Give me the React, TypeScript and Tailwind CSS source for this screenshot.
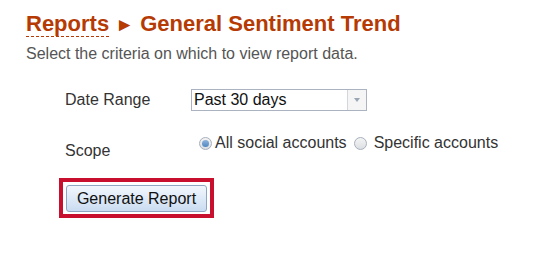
import { useState } from "react"

function Radio({ checked }: { checked: boolean }) {
  return (
    <span className="relative inline-flex h-[13px] w-[13px] items-center justify-center rounded-full border border-[#a7b0bd] bg-gradient-to-b from-[#f4f4f4] to-[#dcdfe3]">
      {checked && (
        <span className="h-[7px] w-[7px] rounded-full bg-gradient-to-b from-[#8fb4dc] to-[#4f86c1]" />
      )}
    </span>
  )
}

export default function App() {
  const [scope, setScope] = useState("all")

  return (
    <div className="min-h-[257px] w-[541px] bg-white pl-[26px] pt-[12px] font-['Liberation_Sans',Arial,sans-serif]">
      {/* Title */}
      <h1 className="text-[22px] font-bold leading-[24px] text-[#b53a04]">
        <span className="border-b border-dashed border-[#b53a04]">Reports</span>{" "}
        <span className="text-[19px]">&#9658;</span> General Sentiment Trend
      </h1>
      <p className="mt-[8px] text-[16px] leading-[18px] text-[#555]">
        Select the criteria on which to view report data.
      </p>

      {/* Criteria */}
      <div className="pl-[39px] text-[16px] leading-[18px] text-[#333]">
        <div className="mt-[26px] flex h-[22px] items-center">
          <div className="w-[126px]">Date Range</div>
          <div className="flex h-[22px] w-[176px] border border-[#abb3c0] bg-white">
            <div className="flex-1 pl-[2px] leading-[20px] text-[#111]">Past 30 days</div>
            <div className="flex w-[19px] items-center justify-center border-l border-[#d3d7dd] bg-[#f5f5f5]">
              <span className="h-0 w-0 border-x-[3px] border-t-[4px] border-x-transparent border-t-[#9aa6b4]" />
            </div>
          </div>
        </div>

        <div className="mt-[23px] flex items-start">
          <div className="w-[126px] pt-[8px]">Scope</div>
          <div className="flex items-center pl-[8px]">
            <label className="flex items-center gap-[3px]" onClick={() => setScope("all")}>
              <Radio checked={scope === "all"} />
              <span>All social accounts</span>
            </label>
            <label className="ml-[7px] flex items-center gap-[7px]" onClick={() => setScope("specific")}>
              <Radio checked={scope === "specific"} />
              <span>Specific accounts</span>
            </label>
          </div>
        </div>
      </div>

      {/* Action */}
      <div className="ml-[33px] mt-[18px] w-fit border-4 border-[#c8102e] px-[3px] pb-[2px] pt-[3px]">
        <button className="block h-[27px] w-[141px] rounded-[3px] border border-[#8ea6c2] bg-gradient-to-b from-[#f2f7fd] to-[#cadcf1] text-[16px] leading-[18px] text-[#111]">
          Generate Report
        </button>
      </div>
    </div>
  )
}
